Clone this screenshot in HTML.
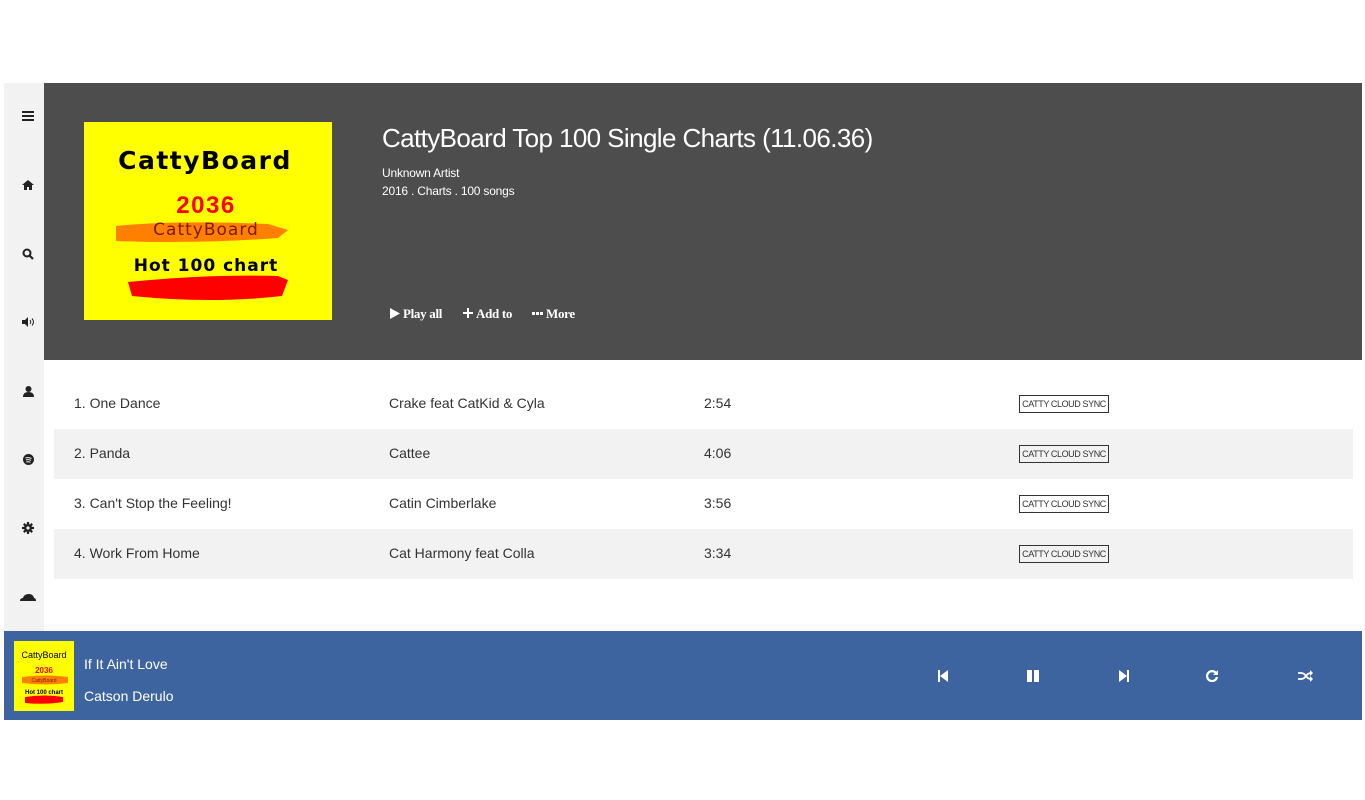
<!DOCTYPE html>
<html><head><meta charset="utf-8"><style>
*{margin:0;padding:0;box-sizing:border-box}
body{width:1365px;height:800px;background:#fff;font-family:"Liberation Sans",sans-serif;position:relative;overflow:hidden}
.abs{position:absolute}
.side{left:4px;top:83px;width:40px;height:548px;background:#f2f2f2}
.hdr{left:44px;top:83px;width:1318px;height:277px;background:#4d4d4d}
.ic{position:absolute;left:14px;width:20px;height:14px;display:flex;align-items:center;justify-content:center}
.row{position:absolute;left:54px;width:1299px;height:50px;font-size:14px;color:#333}
.row span{position:absolute;top:16px}
.g{background:#f2f2f2}
.tag{position:absolute;left:965px;top:16px;width:90px;height:18px;border:1px solid #333;font-size:9px;letter-spacing:-0.4px;text-align:center;line-height:16px;color:#333}
.bar{left:4px;top:631px;width:1358px;height:89px;background:#3d649e}
</style></head><body>
<div class="abs side">
 <div class="ic" style="top:26px"><svg width="12" height="10"><rect y="0" width="12" height="2" fill="#222"/><rect y="4" width="12" height="2" fill="#222"/><rect y="8" width="12" height="2" fill="#222"/></svg></div>
 <div class="ic" style="top:95px"><svg width="12" height="10"><path d="M6 0L0 5h2v5h3V7h2v3h3V5h2z" fill="#222"/></svg></div>
 <div class="ic" style="top:164px"><svg width="12" height="12"><circle cx="5" cy="5" r="3.5" stroke="#222" stroke-width="2" fill="none"/><path d="M7.5 7.5L11 11" stroke="#222" stroke-width="2.2"/></svg></div>
 <div class="ic" style="top:232px"><svg width="13" height="10"><path d="M0 3h3l3-3v10L3 7H0z" fill="#222"/><path d="M8 3q1.5 2 0 4M10 1.5q3 3.5 0 7" stroke="#222" fill="none"/></svg></div>
 <div class="ic" style="top:301px"><svg width="11" height="11"><circle cx="5.5" cy="3" r="3" fill="#222"/><path d="M0 11q0-5 5.5-5t5.5 5z" fill="#222"/></svg></div>
 <div class="ic" style="top:369px"><svg width="11" height="11"><circle cx="5.5" cy="5.5" r="5.5" fill="#222"/><path d="M2.5 4q3-1 6 .5M3 6q2.5-.8 5 .4M3.3 8q2-.5 4 .3" stroke="#f2f2f2" fill="none"/></svg></div>
 <div class="ic" style="top:438px"><svg width="12" height="12"><circle cx="6" cy="6" r="4" fill="#222"/><path d="M6 0v12M0 6h12M1.8 1.8l8.4 8.4M10.2 1.8l-8.4 8.4" stroke="#222" stroke-width="2.2"/><circle cx="6" cy="6" r="1.6" fill="#f2f2f2"/></svg></div>
 <div class="ic" style="top:507px"><svg width="16" height="8"><path d="M0 8q0-3 3-3 1-4 6-4 4 0 5 4 2 0 2 3z" fill="#222"/></svg></div>
</div>
<div class="abs hdr"></div>
<svg class="abs" style="left:84px;top:122px" width="248" height="198">
 <rect width="248" height="198" fill="#ffff00"/>
 <text x="121" y="47" text-anchor="middle" font-family="DejaVu Sans" font-weight="bold" font-size="25" letter-spacing="1.5">CattyBoard</text>
 <text x="122" y="91" text-anchor="middle" font-family="Liberation Sans" font-weight="bold" font-size="24" fill="#f00" letter-spacing="1.5">2036</text>
 <path d="M32 104q60-6 152-2l20 6-10 8q-80 6-162 3z" fill="#ff8000"/>
 <text x="122" y="113" text-anchor="middle" font-family="DejaVu Sans" font-size="17" fill="#7a1a00" letter-spacing="1">CattyBoard</text>
 <text x="122" y="149" text-anchor="middle" font-family="DejaVu Sans" font-weight="bold" font-size="17" letter-spacing="1">Hot 100 chart</text>
 <path d="M44 160q80-8 150-6l10 4-6 16q-70 8-150 0z" fill="#f00"/>
</svg>
<div class="abs" style="left:382px;top:123px;font-size:26px;color:#fff;font-weight:300;letter-spacing:-0.6px">CattyBoard Top 100 Single Charts (11.06.36)</div>
<div class="abs" style="left:382px;top:164px;font-size:12px;color:#fff;line-height:18px;letter-spacing:-0.2px">Unknown Artist<br>2016 . Charts . 100 songs</div>
<div class="abs" style="left:390px;top:306px;font-family:'Liberation Serif',serif;font-size:13px;color:#fff;font-weight:bold;white-space:nowrap;letter-spacing:-0.3px">
 <svg width="10" height="11" style="vertical-align:-1px"><path d="M0 0L10 5.5 0 11z" fill="#fff"/></svg>&nbsp;Play all
 <span style="margin-left:18px"><svg width="10" height="10"><path d="M4 0h2v4h4v2H6v4H4V6H0V4h4z" fill="#fff"/></svg>&nbsp;Add to</span>
 <span style="margin-left:17px"><svg width="11" height="4" style="vertical-align:2px"><rect width="3" height="3" fill="#fff"/><rect x="4" width="3" height="3" fill="#fff"/><rect x="8" width="3" height="3" fill="#fff"/></svg>&nbsp;More</span>
</div>
<div class="row" style="top:379px"><span style="left:20px">1. One Dance</span><span style="left:335px">Crake feat CatKid &amp; Cyla</span><span style="left:650px">2:54</span><div class="tag">CATTY CLOUD SYNC</div></div>
<div class="row g" style="top:429px"><span style="left:20px">2. Panda</span><span style="left:335px">Cattee</span><span style="left:650px">4:06</span><div class="tag">CATTY CLOUD SYNC</div></div>
<div class="row" style="top:479px"><span style="left:20px">3. Can't Stop the Feeling!</span><span style="left:335px">Catin Cimberlake</span><span style="left:650px">3:56</span><div class="tag">CATTY CLOUD SYNC</div></div>
<div class="row g" style="top:529px"><span style="left:20px">4. Work From Home</span><span style="left:335px">Cat Harmony feat Colla</span><span style="left:650px">3:34</span><div class="tag">CATTY CLOUD SYNC</div></div>
<div class="abs bar"></div>
<svg class="abs" style="left:14px;top:641px" width="60" height="70">
 <rect width="60" height="70" fill="#ffff00"/>
 <text x="30" y="17" text-anchor="middle" font-size="9" font-family="Liberation Sans">CattyBoard</text>
 <text x="30" y="32" text-anchor="middle" font-size="8" font-weight="bold" fill="#f00">2036</text>
 <path d="M8 36q25-3 46 0v6q-22 3-46 0z" fill="#ff8000"/>
 <text x="30" y="41" text-anchor="middle" font-size="5" fill="#7a1a00">CattyBoard</text>
 <text x="30" y="53" text-anchor="middle" font-size="6" font-weight="bold">Hot 100 chart</text>
 <path d="M11 56q20-3 38 0v5q-18 3-38 1z" fill="#f00"/>
</svg>
<div class="abs" style="left:84px;top:656px;font-size:14px;color:#fff">If It Ain't Love</div>
<div class="abs" style="left:84px;top:688px;font-size:14px;color:#fff">Catson Derulo</div>
<svg class="abs" style="left:938px;top:670px" width="10" height="12"><path d="M0 0h2v12H0zM10 0v12L2 6z" fill="#fff"/></svg>
<svg class="abs" style="left:1027px;top:670px" width="13" height="12"><rect width="5" height="12" fill="#fff"/><rect x="7" width="5" height="12" fill="#fff"/></svg>
<svg class="abs" style="left:1119px;top:670px" width="10" height="12"><path d="M8 0h2v12H8zM0 0v12L8 6z" fill="#fff"/></svg>
<svg class="abs" style="left:1206px;top:669px" width="13" height="13"><path d="M10 4A5 5 0 1 0 11 8" stroke="#fff" stroke-width="2.2" fill="none"/><path d="M12 1v5H7z" fill="#fff"/></svg>
<svg class="abs" style="left:1298px;top:670px" width="15" height="12"><path d="M0 3h3q3 0 5 3t5 3M0 9h3q3 0 5-3t5-3" stroke="#fff" stroke-width="1.8" fill="none"/><path d="M12 0l3 3-3 3zM12 6l3 3-3 3z" fill="#fff"/></svg>
</body></html>
